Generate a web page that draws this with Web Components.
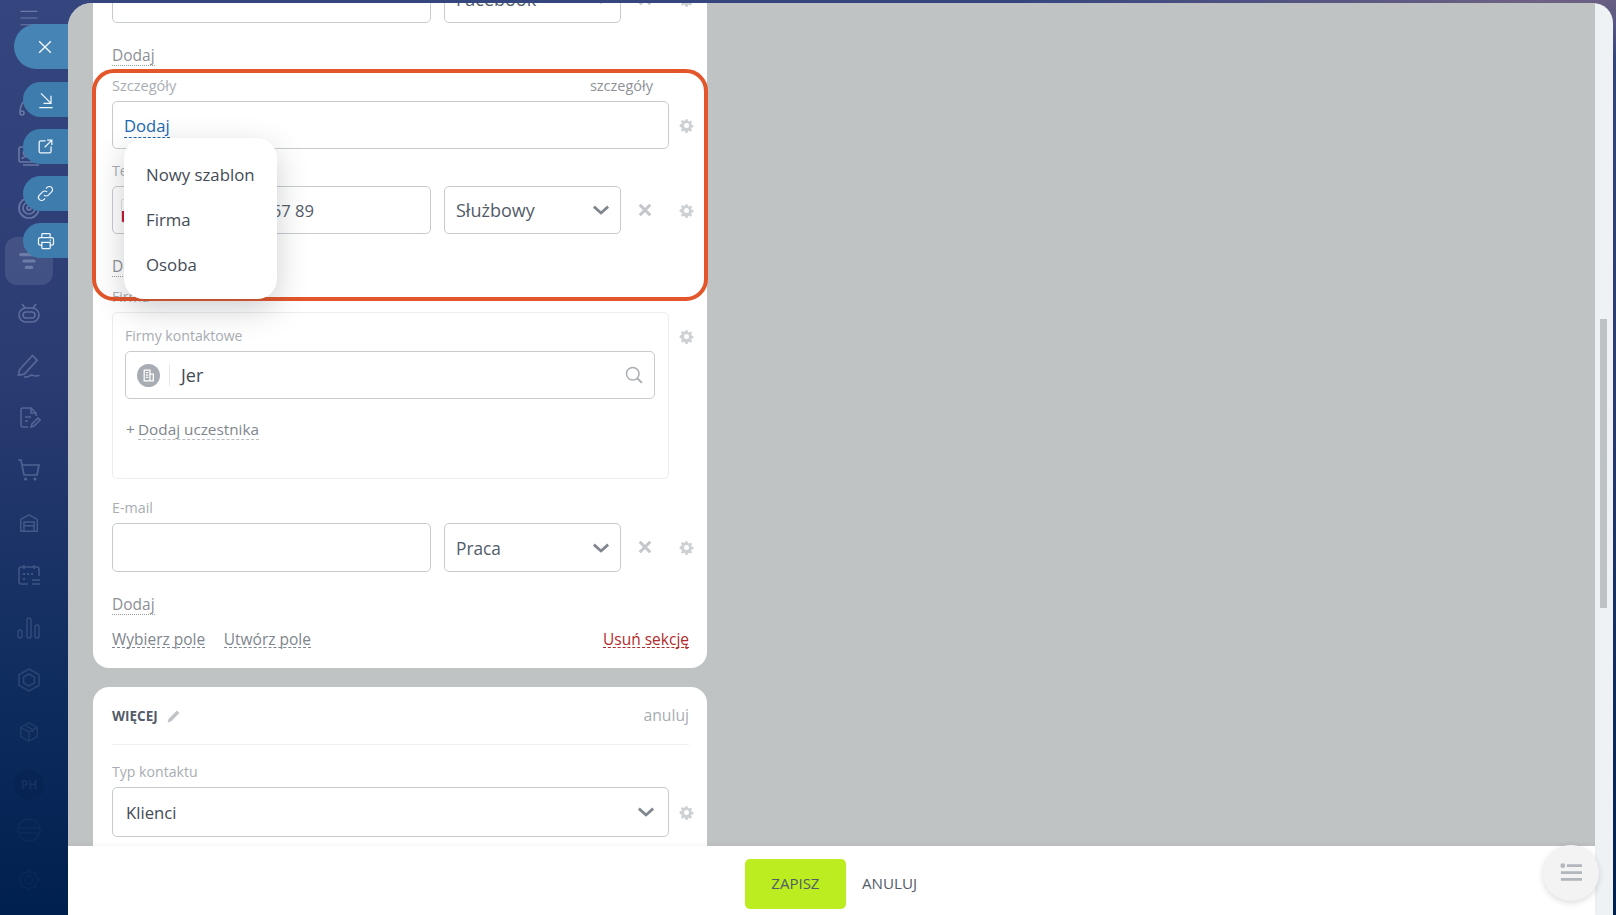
<!DOCTYPE html>
<html lang="pl">
<head>
<meta charset="utf-8">
<title>CRM</title>
<style>
html,body{margin:0;padding:0;height:100%;overflow:hidden}
body{font-family:"Open Sans","Noto Sans",sans-serif;background:#00204f}
</style>
</head>
<body>
<crm-app>
  <crm-rail slot="rail"></crm-rail>
  <crm-side-actions slot="actions"></crm-side-actions>
  <crm-panel slot="panel">
    <crm-card>
      <crm-field-row tall="48" remove>
        <crm-input slot="main"></crm-input>
        <crm-select slot="kind" value="Facebook" fs="18" nudge="0"></crm-select>
      </crm-field-row>
      <crm-add-link>Dodaj</crm-add-link>
      <crm-label gap="11" aside="szczegóły" fs="14.5">Szczegóły</crm-label>
      <crm-field-row tall="48">
        <crm-input slot="main" full><crm-link tone="blue">Dodaj</crm-link></crm-input>
      </crm-field-row>
      <crm-label gap="13">Telefon</crm-label>
      <crm-field-row tall="48" remove>
        <crm-input slot="main" flag>+48 12 345 67 89</crm-input>
        <crm-select slot="kind" value="Służbowy" fs="18" nudge="0"></crm-select>
      </crm-field-row>
      <crm-add-link>Dodaj</crm-add-link>
      <crm-label gap="11">Firma</crm-label>
      <crm-field-row tall="167" top>
        <crm-company-box slot="main"></crm-company-box>
      </crm-field-row>
      <crm-label gap="20" fs="14.3">E-mail</crm-label>
      <crm-field-row tall="49" remove>
        <crm-input slot="main"></crm-input>
        <crm-select slot="kind" value="Praca" fs="17.3" nudge="2"></crm-select>
      </crm-field-row>
      <crm-add-link>Dodaj</crm-add-link>
      <crm-section-foot></crm-section-foot>
    </crm-card>
    <crm-card second>
      <crm-card-head>WIĘCEJ</crm-card-head>
      <crm-label gap="18">Typ kontaktu</crm-label>
      <crm-field-row tall="50">
        <crm-select slot="main" full value="Klienci" fs="16.7"></crm-select>
      </crm-field-row>
    </crm-card>
    <crm-highlight slot="overlay"></crm-highlight>
    <crm-menu slot="overlay"></crm-menu>
    <crm-footer slot="footer"></crm-footer>
    <crm-fab slot="fab"></crm-fab>
  </crm-panel>
</crm-app>

<script>
const ICONS = {
  close:'<path d="M5 5l14 14M19 5L5 19" fill="none" stroke="currentColor" stroke-width="1.700"/>',
  remove:'<path d="M5 5l14 14M19 5L5 19" fill="none" stroke="currentColor" stroke-width="4"/>',
  chevron:'<path d="M2.500 7.500L12 16l9.500-8.500" fill="none" stroke="currentColor" stroke-width="3.600"/>',
  gear:'<path fill="currentColor" fill-rule="evenodd" d="M10.2 2h3.6l.5 2.7 1.9.8 2.3-1.6 2.5 2.5-1.6 2.3.8 1.9 2.8.5v3.6l-2.8.5-.8 1.9 1.6 2.3-2.5 2.5-2.3-1.6-1.9.8-.5 2.8h-3.6l-.5-2.8-1.9-.8-2.3 1.6-2.5-2.5 1.6-2.3-.8-1.9L1 13.8v-3.6l2.8-.5.8-1.9L3 5.5 5.5 3l2.300 1.600 1.900-.8zM12 8a4 4 0 100 8 4 4 0 000-8z"/>',
  search:'<circle cx="10.500" cy="10.500" r="7.500" fill="none" stroke="currentColor" stroke-width="1.800"/><path d="M16 16l5.500 5.500" stroke="currentColor" stroke-width="2.400" fill="none"/>',
  pencil:'<path fill="currentColor" d="M17.500 2.500l4 4L8 20l-5.500 1.500L4 16z"/>',
  building:'<circle cx="12" cy="12" r="12" fill="currentColor"/><path fill="none" stroke="#fff" stroke-width="1.300" d="M7.500 6.500h6v11h-6zM13.500 10.500h3.500v7h-3.500M9.300 9h2.400M9.300 11.500h2.400M9.300 14h2.400"/>',
  download:'<path d="M6 4l12 12M18 7v9H9M4 21h16" fill="none" stroke="currentColor" stroke-width="1.500"/>',
  open:'<path d="M12 5H6a2 2 0 00-2 2v11a2 2 0 002 2h11a2 2 0 002-2v-6M14 4h6v6M20 4l-9 9" fill="none" stroke="currentColor" stroke-width="1.600"/>',
  link:'<path d="M10 14a4 4 0 005.700 0l4-4a4 4 0 00-5.700-5.700l-1.500 1.500M14 10a4 4 0 00-5.700 0l-4 4a4 4 0 005.700 5.700l1.500-1.500" fill="none" stroke="currentColor" stroke-width="1.500"/>',
  print:'<path d="M7 8V4a1 1 0 011-1h8a1 1 0 011 1v4M7 17H5a2 2 0 01-2-2v-5a2 2 0 012-2h14a2 2 0 012 2v5a2 2 0 01-2 2h-2M7 13.500h10V20a1 1 0 01-1 1H8a1 1 0 01-1-1zM16.500 10.800h1.500" fill="none" stroke="currentColor" stroke-width="1.500"/>',
  burger:'<path d="M2 4h20M2 12h20M2 20h20" fill="none" stroke="currentColor" stroke-width="1.300"/>',
  crm:'<path d="M3 20c0-6 3-12 9-13M14 7c4 1 7 5 7 10" fill="none" stroke="currentColor" stroke-width="1.600"/><circle cx="5" cy="21" r="2" fill="none" stroke="currentColor" stroke-width="1.600"/>',
  contact:'<rect x="2" y="3" width="18" height="15" rx="2" fill="none" stroke="currentColor" stroke-width="1.600"/><circle cx="9" cy="9" r="2.500" fill="none" stroke="currentColor" stroke-width="1.600"/><path d="M5 15c1-3 7-3 8 0M6 21h16" fill="none" stroke="currentColor" stroke-width="1.600"/>',
  target:'<circle cx="12" cy="12" r="10" fill="none" stroke="currentColor" stroke-width="1.700"/><circle cx="12" cy="12" r="6" fill="none" stroke="currentColor" stroke-width="1.700"/><circle cx="12" cy="12" r="2" fill="none" stroke="currentColor" stroke-width="1.700"/>',
  funnel:'<path d="M3 5h18M6.500 12h11M9 19h6" fill="none" stroke="currentColor" stroke-width="3.400" stroke-linecap="round"/>',
  robot:'<path d="M5 3l3 4M19 3l-3 4" fill="none" stroke="currentColor" stroke-width="1.600"/><rect x="2" y="7" width="20" height="14" rx="7" fill="none" stroke="currentColor" stroke-width="1.600"/><rect x="6" y="11" width="12" height="6" rx="3" fill="none" stroke="currentColor" stroke-width="1.600"/>',
  pen:'<path d="M4 15L15 3l4 4L8 19l-5 1zM8 21c3 2 5-2 7-1s3 1 6 0" fill="none" stroke="currentColor" stroke-width="1.400"/>',
  doc:'<path d="M11 21H6a2 2 0 01-2-2V4a2 2 0 012-2h8l5 5v3M14 2v5h5M8 11h6M8 15h3M14 21l1-3 6-6 2 2-6 6z" fill="none" stroke="currentColor" stroke-width="1.600"/>',
  cart:'<path d="M1 2h3l3 15h13l2-10H5" fill="none" stroke="currentColor" stroke-width="1.700"/><circle cx="8.500" cy="21" r="1.600" fill="currentColor"/><circle cx="18" cy="21" r="1.600" fill="currentColor"/>',
  store:'<path d="M3 21V8l9-5 9 5v13zM6.500 21V11h11v10M6.500 15h11" fill="none" stroke="currentColor" stroke-width="1.600"/>',
  calendar:'<path d="M11 21H4a2 2 0 01-2-2V6a2 2 0 012-2h16a2 2 0 012 2v7M7 2v4M17 2v4M15 17h8M15 21h8" fill="none" stroke="currentColor" stroke-width="1.600"/><path d="M6 10h2v2H6zM10 10h2v2h-2zM14 10h2v2h-2zM6 15h2v2H6z" fill="currentColor"/>',
  chart:'<path d="M3 22a2 2 0 01-2-2v-4a2 2 0 014 0v4a2 2 0 01-2 2zM12 22a2 2 0 01-2-2V4a2 2 0 014 0v16a2 2 0 01-2 2zM20 22a2 2 0 01-2-2v-9a2 2 0 014 0v9a2 2 0 01-2 2z" fill="none" stroke="currentColor" stroke-width="1.400"/>',
  hex:'<path d="M12 1l10 5.700v10.600L12 23 2 17.300V6.700z" fill="none" stroke="currentColor" stroke-width="1.600"/><path d="M12 6l5.500 3.100v5.800L12 18l-5.500-3.100V9.100z" fill="none" stroke="currentColor" stroke-width="1.600"/>',
  box:'<path d="M12 2l9 5v10l-9 5-9-5V7zM3 7l9 5 9-5M12 12v10M7 4.500l9 5v3" fill="none" stroke="currentColor" stroke-width="1.600"/>',
  wave:'<circle cx="12" cy="12" r="11" fill="none" stroke="currentColor" stroke-width="1.300"/><path d="M2 10h20M3 15h18" fill="none" stroke="currentColor" stroke-width="1.300"/>',
  cog:'<circle cx="12" cy="12" r="4" fill="none" stroke="currentColor" stroke-width="1.500"/><path d="M12 2l3 3h4v4l3 3-3 3v4h-4l-3 3-3-3H5v-4l-3-3 3-3V5h4z" fill="none" stroke="currentColor" stroke-width="1.500"/>',
  list:'<circle cx="3" cy="4" r="2.600" fill="currentColor"/><path d="M7.500 4H24M1 11.500h23M1 19h23" fill="none" stroke="currentColor" stroke-width="3"/>'
};

class Base extends HTMLElement {
  constructor(){ super(); this.attachShadow({mode:'open'}); }
  connectedCallback(){ if(!this._done){ this._done = true; this.shadowRoot.innerHTML = this.render(); } }
}
const def = (name, render) => customElements.define(name, class extends Base { render(){ return render(this); } });

def('crm-icon', h => {
  const s = h.getAttribute('size') || 16;
  return `<style>:host{display:inline-flex;line-height:0;color:inherit}svg{display:block}</style>
  <svg width="${s}" height="${s}" viewBox="0 0 24 24" preserveAspectRatio="none">${ICONS[h.getAttribute('name')]}</svg>`;
});

def('crm-app', () => `<style>
  :host{display:grid;grid-template-columns:68px 1fr;width:1616px;height:915px;position:relative;overflow:hidden;
    background:radial-gradient(520px 60px at 1540px 0,#6f6283 0,rgba(111,98,131,0) 100%),linear-gradient(180deg,#35467f 0,#2b3c73 40%,#0f2c5f 75%,#00204f 100%)}
  </style><slot name="rail"></slot><slot name="panel"></slot><slot name="actions"></slot>`);

const RAIL = [['crm',.5,24],['contact',.5,24],['target',.5,24],['funnel',.45,22,1],['robot',.42,24],['pen',.38,28],['doc',.36,24],['cart',.36,24],['store',.3,22],['calendar',.28,24],['chart',.22,24],['hex',.18,24],['box',.13,22],['ph',1,30],['wave',.05,24],['cog',.04,24]];
def('crm-rail', () => `<style>
  :host{display:flex;flex-direction:column;align-items:center;width:48px;padding-left:5px;color:#9fb0d4;box-sizing:content-box}
  .burger{height:36px;display:flex;align-items:center;margin-bottom:41.500px;opacity:.5}
  .slot{height:52.4px;width:48px;flex:none;display:flex;align-items:center;justify-content:center;border-radius:12px}
  .active{background:rgba(255,255,255,.1);height:48px;margin:2.2px 0}
  .wave{margin-top:-7px}
  .last{margin-top:-3px}
  .ph{width:30px;height:30px;border-radius:50%;background:rgba(0,20,60,.14);display:flex;align-items:center;justify-content:center}
  .ph span{font:700 12px "Open Sans",sans-serif;color:#172f63}
  </style>
  <div class="burger"><crm-icon name="burger" size="20"></crm-icon></div>
  ${RAIL.map(([n,o,s,a]) => `<div class="slot ${a?'active':''} ${n==='cog'?'last':''} ${n==='wave'?'wave':''}"><span style="opacity:${o};display:inline-flex">${n==='ph'?'<span class="ph"><span>PH</span></span>':`<crm-icon name="${n}" size="${s}"></crm-icon>`}</span></div>`).join('')}`);

def('crm-side-actions', () => `<style>
  :host{position:absolute;left:0;top:24px;width:68px;display:flex;flex-direction:column;align-items:flex-end}
  div{display:flex;align-items:center;justify-content:center;color:#f0f5fa;box-sizing:border-box;width:45px;height:35px;border-radius:18px 0 0 18px;background:#3e7cad;margin-top:12px}
  .x{width:54px;height:45px;border-radius:23px 0 0 23px;background:#4684b6;margin-top:0;margin-bottom:1px;padding-left:8px}
  </style>
  <div class="x"><crm-icon name="close" size="20"></crm-icon></div>
  <div><crm-icon name="download" size="20"></crm-icon></div>
  <div><crm-icon name="open" size="19"></crm-icon></div>
  <div><crm-icon name="link" size="19"></crm-icon></div>
  <div><crm-icon name="print" size="20"></crm-icon></div>`);

def('crm-panel', () => `<style>
  :host{display:flex;margin:3px 3px 0 0;border-radius:24px 20px 0 0;overflow:hidden;background:#eef2f5;height:912px;position:relative}
  .col{width:1527px;display:flex;flex-direction:column;background:#bfc3c4;position:relative;flex:none}
  .scroll{flex:1;min-height:0;overflow:hidden;padding-left:25px;position:relative}
  .stage{width:614px;margin-top:-28px;position:relative;display:flex;flex-direction:column;gap:19px}
  .bar{flex:1;position:relative}
  .thumb{position:absolute;left:5px;top:316px;width:7px;height:289px;background:#bdc2c5}
  </style>
  <div class="col">
    <div class="scroll"><div class="stage"><slot></slot><slot name="overlay"></slot></div></div>
    <slot name="footer"></slot>
  </div>
  <div class="bar"><div class="thumb"></div></div>
  <slot name="fab"></slot>`);

def('crm-card', h => `<style>
  :host{display:block;background:#fff;border-radius:0 0 16px 16px;padding:0 18px ${h.hasAttribute('second')?'40px':'20px'} 19px;flex:none}
  ${h.hasAttribute('second')?':host{border-radius:16px}':''}
  </style><slot></slot>`);

def('crm-field-row', h => `<style>
  :host{display:grid;grid-template-columns:557px 34px;margin-right:-14px;height:${h.getAttribute('tall')}px;color:#ced1d4}
  .main{display:flex;min-width:0;height:${h.getAttribute('tall')}px}
  .one{display:block;width:100%}
  .kind{margin-left:13px;display:block;width:177px;box-sizing:border-box}
  .rm{display:flex;align-items:center;justify-content:center;color:#c3c6ca;width:48px;padding-bottom:1px}
  .g{display:flex;justify-content:center;align-items:${h.hasAttribute('top')?'flex-start':'center'};${h.hasAttribute('top')?'padding-top:17px':''}}
  </style>
  <div class="main">
  ${h.hasAttribute('remove')
    ? `<div style="display:flex;width:100%"><div style="width:319px"><slot name="main"></slot></div><div class="kind"><slot name="kind"></slot></div><div class="rm"><crm-icon name="remove" size="18"></crm-icon></div></div>`
    : `<div class="one"><slot name="main"></slot></div>`}
  </div>
  <div class="g"><crm-icon name="gear" size="15"></crm-icon></div>`);

def('crm-input', h => `<style>
  :host{display:flex;align-items:center;height:100%;box-sizing:border-box;border:1px solid #c6cbd0;border-radius:5px;padding:${h.hasAttribute('full')?'2px':'1px'} 11px 0;
    font:16.600px/24px "Open Sans",sans-serif;color:#535c69;background:#fff;position:relative;white-space:nowrap}
  .flag{width:24px;height:24px;box-sizing:border-box;border:1px solid #dfe2e5;border-radius:2px;margin:0 38px 0 -3px;flex:none;
    background:linear-gradient(#fff 50%,#c8102e 50%)}
  </style>${h.hasAttribute('flag')?'<span class="flag"></span>':''}<slot></slot>`);

def('crm-select', h => `<style>
  :host{display:flex;align-items:center;justify-content:space-between;height:100%;box-sizing:border-box;border:1px solid #c6cbd0;border-radius:5px;
    padding:0 ${h.hasAttribute('full')?'13px':'10px'} 0 ${h.hasAttribute('full')?'13px':'11px'};font:${h.getAttribute('fs')||17}px/24px "Open Sans",sans-serif;color:${h.hasAttribute('full')?'#444b55':'#535c69'};background:#fff}
  span{padding-top:${h.getAttribute('nudge')||1}px}
  crm-icon{color:#80868e}
  </style><span>${h.getAttribute('value')}</span><crm-icon name="chevron" size="18"></crm-icon>`);

def('crm-link', h => {
  const t = h.getAttribute('tone');
  const col = t==='blue' ? '#2067b0' : t==='red' ? '#b32a2a' : '#80868e';
  return `<style>:host{display:inline-block;color:${col};border-bottom:1px dashed ${col};line-height:${t==='blue'?'22px':'16px'};white-space:nowrap}</style><slot></slot>`;
});

def('crm-add-link', () => `<style>
  :host{display:block;margin-top:23px;height:20px;font:15.500px/19px "Open Sans",sans-serif;color:#8d9097}
  span{display:inline-block;height:19px;border-bottom:1px dotted #9a9da3}
  </style><span><slot></slot></span>`);

def('crm-label', h => `<style>
  :host{display:flex;justify-content:space-between;margin-top:${h.getAttribute('gap')||0}px;margin-bottom:6px;height:18px;
    font:${h.getAttribute('fs')||14.1}px/18px "Open Sans",sans-serif;color:#a8adb3;padding-right:36px}
  .a{color:#8e9298}
  </style><span><slot></slot></span>${h.getAttribute('aside')?`<span class="a">${h.getAttribute('aside')}</span>`:''}`);

def('crm-company-box', () => `<style>
  :host{display:block;height:167px;box-sizing:border-box;border:1px solid #ebedee;border-radius:5px;padding:14px 13px 0 12px}
  .lab{font:14.100px/18px "Open Sans",sans-serif;color:#a8adb3;margin-bottom:6px}
  .inp{height:48px;box-sizing:border-box;border:1px solid #c6cbd0;border-radius:5px;display:flex;align-items:center;padding:0 10px 0 11px;color:#a8adb4}
  .sep{width:1px;height:22px;background:#e6e8ea;margin:0 11px 0 9px}
  .val{flex:1;font:18px/24px "Open Sans",sans-serif;color:#444b55}
  .srch{color:#a9adb2}
  .add{margin-top:21px;height:20px;font:15.300px/19px "Open Sans",sans-serif;color:#80868e;padding-left:1px;display:flex}
  .plus{width:12px}
  .u{display:inline-block;height:19px;border-bottom:1px dashed #b9bcc1}
  </style>
  <div class="lab">Firmy kontaktowe</div>
  <div class="inp"><crm-icon name="building" size="23"></crm-icon><span class="sep"></span><span class="val">Jer</span><crm-icon class="srch" name="search" size="20"></crm-icon></div>
  <div class="add"><span class="plus">+</span><span class="u">Dodaj uczestnika</span></div>`);

def('crm-section-foot', () => `<style>
  :host{display:flex;margin-top:16px;height:17px;font:15.500px/16px "Open Sans",sans-serif;gap:18.500px}
  .r{margin-left:auto}
  </style>
  <crm-link>Wybierz pole</crm-link><crm-link>Utwórz pole</crm-link><crm-link class="r" tone="red">Usuń sekcję</crm-link>`);

def('crm-card-head', () => `<style>
  :host{display:block;padding-top:19px;border-bottom:1px solid #eef0f1}
  .t{display:flex;align-items:center;height:20px;margin-bottom:18px}
  b{font:700 13.500px/20px "Open Sans",sans-serif;color:#535c69}
  crm-icon{margin-left:8px;color:#bfc3c7}
  .a{margin-left:auto;font:15.700px/18px "Open Sans",sans-serif;color:#a8adb3;margin-top:-2px}
  </style><div class="t"><b><slot></slot></b><crm-icon name="pencil" size="15"></crm-icon><span class="a">anuluj</span></div>`);

def('crm-highlight', () => `<style>
  :host{position:absolute;left:-1px;top:94px;width:616px;height:232px;box-sizing:border-box;border:4px solid #e3552a;border-radius:22px;pointer-events:none}
  </style>`);

def('crm-menu', () => `<style>
  :host{position:absolute;left:31px;top:163px;width:153px;height:161px;box-sizing:border-box;background:#fff;border-radius:20px;padding:14px 0 0 22px;
    box-shadow:0 10px 30px rgba(60,65,70,.25);font:16.800px/45px "Open Sans",sans-serif;color:#444b55}
  div{height:45px;white-space:nowrap}
  </style><div>Nowy szablon</div><div>Firma</div><div>Osoba</div>`);

def('crm-footer', () => `<style>
  :host{display:flex;justify-content:center;align-items:flex-start;flex:none;height:69px;padding-top:13px;box-sizing:border-box;background:#fff;gap:16px;box-shadow:0 -2px 4px rgba(0,0,0,.04);position:relative;padding-right:1px}
  .z{width:101px;height:50px;background:#bbed21;border-radius:5px;display:flex;align-items:center;justify-content:center;font:500 15px "Open Sans",sans-serif;color:#535c69;padding-bottom:3px;box-sizing:border-box}
  .c{height:50px;display:flex;align-items:center;font:500 15.200px "Open Sans",sans-serif;color:#535c69;padding-bottom:3px;box-sizing:border-box}
  </style><div class="z">ZAPISZ</div><div class="c">ANULUJ</div>`);

def('crm-fab', () => `<style>
  :host{position:absolute;left:1475px;top:842px;width:56px;height:56px;border-radius:50%;background:#f3f3f4;display:flex;align-items:center;justify-content:center;box-shadow:0 2px 6px rgba(0,0,0,.14);color:#b3b6bc}
  </style><crm-icon name="list" size="22"></crm-icon>`);
</script>
</body>
</html>
